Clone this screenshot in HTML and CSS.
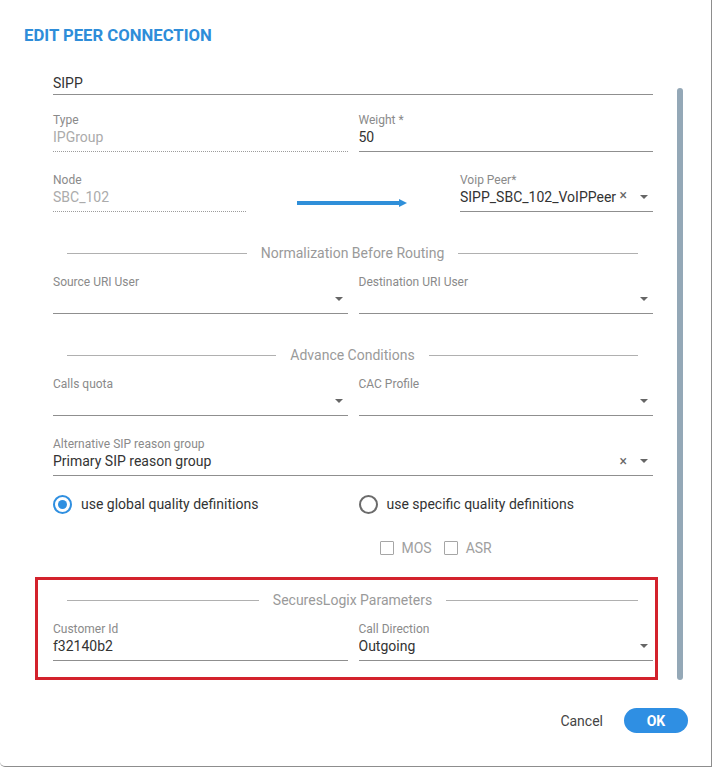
FILE: index.html
```html
<!DOCTYPE html>
<html lang="en">
<head>
<meta charset="utf-8">
<title>Edit Peer Connection</title>
<link rel="stylesheet" href="styles.css">
</head>
<body>
<div class="dialog">
  <h1 class="title">EDIT PEER CONNECTION</h1>
  <div class="body">
    <div class="form">
      <div class="field plain"><div class="value">SIPP</div></div>

      <div class="row cols sp-17">
        <div class="field disabled"><div class="label">Type</div><div class="value">IPGroup</div></div>
        <div class="field"><div class="label">Weight *</div><div class="value">50</div></div>
      </div>

      <div class="row peer sp-20">
        <div class="field disabled"><div class="label">Node</div><div class="value">SBC_102</div></div>
        <svg class="arrow" width="110" height="10" viewBox="0 0 110 10">
          <rect x="0" y="3" width="103" height="4" fill="#2f8fd9"/>
          <polygon points="102,1 110,5 102,9" fill="#2f8fd9"/>
        </svg>
        <div class="field"><div class="label">Voip Peer*</div><div class="value"><span class="text">SIPP_SBC_102_VoIPPeer</span><span class="clear raised">×</span><span class="caret"></span></div></div>
      </div>

      <div class="divider sp-32"><span>Normalization Before Routing</span></div>

      <div class="row cols sp-12">
        <div class="field"><div class="label">Source URI User</div><div class="value"><span class="text"></span><span class="caret"></span></div></div>
        <div class="field"><div class="label">Destination URI User</div><div class="value"><span class="text"></span><span class="caret"></span></div></div>
      </div>

      <div class="divider sp-32"><span>Advance Conditions</span></div>

      <div class="row cols sp-12">
        <div class="field"><div class="label">Calls quota</div><div class="value"><span class="text"></span><span class="caret"></span></div></div>
        <div class="field"><div class="label">CAC Profile</div><div class="value"><span class="text"></span><span class="caret"></span></div></div>
      </div>

      <div class="field sp-20"><div class="label">Alternative SIP reason group</div><div class="value"><span class="text">Primary SIP reason group</span><span class="clear">×</span><span class="caret"></span></div></div>

      <div class="row cols sp-18">
        <div class="option"><span class="radio on"></span>use global quality definitions</div>
        <div class="option"><span class="radio"></span>use specific quality definitions</div>
      </div>

      <div class="row cols sp-25">
        <div></div>
        <div class="checks">
          <span class="check"><span class="box"></span>MOS</span>
          <span class="check"><span class="box"></span>ASR</span>
        </div>
      </div>

      <div class="highlight">
        <div class="divider"><span>SecuresLogix Parameters</span></div>
        <div class="row cols sp-12">
          <div class="field"><div class="label">Customer Id</div><div class="value">f32140b2</div></div>
          <div class="field"><div class="label">Call Direction</div><div class="value"><span class="text">Outgoing</span><span class="caret"></span></div></div>
        </div>
      </div>
    </div>
    <div class="scrollbar"></div>
  </div>
  <div class="footer">
    <button class="btn-cancel" type="button">Cancel</button>
    <button class="btn-ok" type="button">OK</button>
  </div>
</div>
</body>
</html>
```

FILE: styles.css
```css
* { box-sizing: border-box; }

body {
  margin: 0;
  background: #fff;
  font-family: Roboto, "Liberation Sans", sans-serif;
}

.dialog {
  width: 712px;
  height: 767px;
  background: #fff;
  border-right: 1px solid #8d8d8d;
  border-bottom: 1px solid #8d8d8d;
  border-bottom-left-radius: 5px;
  display: flex;
  flex-direction: column;
}

.title {
  margin: 24px 0 0 24px;
  font-size: 16.7px;
  line-height: 24px;
  font-weight: 700;
  color: #2e8dd9;
}

.body {
  display: flex;
  align-items: flex-start;
}

.form {
  width: 600px;
  margin-left: 53px;
  padding-top: 26px;
}

.scrollbar {
  width: 6px;
  height: 592px;
  margin-left: 24px;
  margin-top: 40px;
  background: #94a8b7;
  border-radius: 3px;
}

.sp-12 { margin-top: 12px; }
.sp-17 { margin-top: 17px; }
.sp-18 { margin-top: 18px; }
.sp-20 { margin-top: 20px; }
.sp-25 { margin-top: 25px; }
.sp-32 { margin-top: 32px; }

.field {
  border-bottom: 1px solid #8f8f8f;
  padding-bottom: 5px;
  min-width: 0;
}

.field.plain { padding-bottom: 2px; }

.field.disabled { border-bottom: 1px dotted #9c9c9c; }
.field.disabled .value { color: #ababab; }

.label {
  font-size: 12px;
  line-height: 16px;
  color: #8a8a8a;
}

.value {
  display: flex;
  align-items: center;
  height: 18px;
  font-size: 14px;
  line-height: 18px;
  color: #333;
}

.value .text {
  flex: 1;
  min-width: 0;
  overflow: hidden;
  white-space: nowrap;
}

.clear {
  color: #666;
  font-size: 14px;
  margin-right: 13px;
}

.clear.raised {
  align-self: flex-start;
  line-height: 14px;
}

.caret {
  width: 0;
  height: 0;
  border-left: 4px solid transparent;
  border-right: 4px solid transparent;
  border-top: 4px solid #666;
  margin-right: 5px;
}

.row.cols {
  display: grid;
  grid-template-columns: 1fr 1fr;
  column-gap: 11px;
}

.row.peer {
  display: grid;
  grid-template-columns: 193px 1fr 193px;
}

.arrow {
  justify-self: center;
  margin-top: 26px;
  margin-right: 3px;
}

.divider {
  display: flex;
  align-items: center;
  margin-left: 14px;
  margin-right: 15px;
  font-size: 14px;
  line-height: 18px;
  color: #9a9a9a;
}

.divider::before,
.divider::after {
  content: "";
  flex: 1;
  height: 1px;
  background: #b0b0b0;
}

.divider span { padding: 0 14px; }

.option {
  display: flex;
  align-items: center;
  gap: 9px;
  font-size: 14px;
  line-height: 20px;
  color: #333;
}

.radio {
  flex: none;
  width: 19px;
  height: 19px;
  border-radius: 50%;
  border: 2px solid #6b6b6b;
  display: flex;
  align-items: center;
  justify-content: center;
}

.radio.on { border-color: #2f8fe0; }
.radio.on::after {
  content: "";
  width: 9px;
  height: 9px;
  border-radius: 50%;
  background: #2f8fe0;
}

.checks {
  display: flex;
  align-items: center;
  padding-left: 21px;
  font-size: 14px;
  line-height: 18px;
  color: #a0a0a0;
}

.check {
  display: flex;
  align-items: center;
}

.check + .check { margin-left: 12px; }

.box {
  width: 14px;
  height: 14px;
  border: 1.5px solid #a6a6a6;
  border-radius: 1px;
  margin-right: 8px;
}

.highlight {
  margin: 20px -5px 0 -18px;
  border: 3px solid #d3222c;
  padding: 11px 2px 16px 15px;
}

.footer {
  display: flex;
  justify-content: flex-end;
  align-items: center;
  margin-top: 28px;
  padding-right: 23px;
}

.btn-cancel {
  font-family: Roboto, "Liberation Sans", sans-serif;
  font-size: 14px;
  color: #444;
  background: none;
  border: 0;
  padding: 0 10px;
  height: 25px;
  margin-right: 11px;
}

.btn-ok {
  font-family: Roboto, "Liberation Sans", sans-serif;
  width: 64px;
  height: 25px;
  border: 0;
  border-radius: 13px;
  background: #2f8fe3;
  color: #fff;
  font-size: 14px;
  font-weight: 700;
}
```
